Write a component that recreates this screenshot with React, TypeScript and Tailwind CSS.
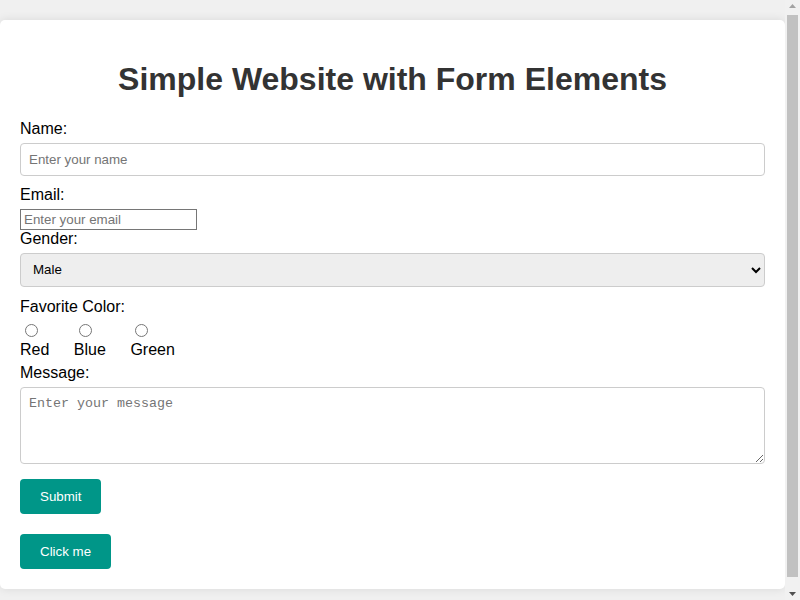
import { useState } from "react";

const colors = ["Red", "Blue", "Green"];

// headless capture hides native scrollbars, so the page scrollbar is drawn
const Scrollbar = () => (
    <div className="flex w-[15px] shrink-0 flex-col bg-[#f1f1f1]">
        <div className="flex h-[12px] items-center justify-center">
            <svg width="7" height="4" viewBox="0 0 7 4">
                <polygon points="3.5,0 7,4 0,4" fill="#a3a3a3" />
            </svg>
        </div>
        <div className="flex-1 px-[2px] pb-[11px] pt-[3px]">
            <div className="h-full bg-[#c1c1c1]" />
        </div>
        <div className="flex h-[12px] items-center justify-center">
            <svg width="7" height="4" viewBox="0 0 7 4">
                <polygon points="0,0 7,0 3.5,4" fill="#505050" />
            </svg>
        </div>
    </div>
);

export default function App() {
    const [color, setColor] = useState("");

    return (
        <div className="flex h-screen overflow-hidden bg-[#f0f0f0] font-['Liberation_Sans',Arial,sans-serif] leading-[normal] text-black">
            <div className="min-w-0 flex-1 py-[20px]">
                <div className="mx-auto max-w-[800px] rounded-[5px] bg-white p-[20px] shadow-[0_0_10px_rgba(0,0,0,0.1)]">
                    <h1 className="my-[21.44px] text-center text-[32px] font-bold leading-[normal] text-[#333]">
                        Simple Website with Form Elements
                    </h1>

                    <form onSubmit={(e) => e.preventDefault()}>
                        <label htmlFor="name" className="mb-[5px] block text-[16px]">Name:</label>
                        <input
                            id="name"
                            type="text"
                            placeholder="Enter your name"
                            className="mb-[10px] block h-[33px] w-full rounded-[4px] border border-[#ccc] px-[8px] text-[13.33px] placeholder:text-[#757575]"
                        />

                        <label htmlFor="email" className="mb-[5px] block text-[16px]">Email:</label>
                        <input
                            id="email"
                            type="email"
                            placeholder="Enter your email"
                            className="block h-[21px] w-[177px] border border-[#767676] px-[3px] text-[13.33px] placeholder:text-[#757575]"
                        />

                        <label htmlFor="gender" className="mb-[5px] block text-[16px]">Gender:</label>
                        <select
                            id="gender"
                            className="mb-[11px] block h-[34px] w-full rounded-[4px] border border-[#ccc] bg-[#eee] px-[8px] text-[13.33px]"
                        >
                            <option>Male</option>
                            <option>Female</option>
                            <option>Other</option>
                        </select>

                        <label className="mb-[5px] block text-[16px]">Favorite Color:</label>
                        <div className="flex gap-[24.5px]">
                            {colors.map((c) => (
                                <div key={c} className="flex flex-col items-start">
                                    <div className="h-[19.7px]">
                                        <input
                                            type="radio"
                                            name="color"
                                            id={c.toLowerCase()}
                                            checked={color === c}
                                            onChange={() => setColor(c)}
                                            className="ml-[5px] mr-[3px] mt-[3px] h-[13px] w-[13px]"
                                        />
                                    </div>
                                    <label htmlFor={c.toLowerCase()} className="mb-[5px] block text-[16px]">{c}</label>
                                </div>
                            ))}
                        </div>

                        <label htmlFor="message" className="mb-[5px] block text-[16px]">Message:</label>
                        <textarea
                            id="message"
                            rows={4}
                            placeholder="Enter your message"
                            className="block h-[77px] w-full rounded-[4px] border border-[#ccc] p-[8px] font-['Liberation_Mono',monospace] text-[13.33px] placeholder:text-[#757575]"
                        />

                        <button
                            type="submit"
                            className="mt-[15px] block rounded-[4px] bg-[#009688] px-[20px] py-[10px] text-[13.33px] leading-[15.3px] text-white"
                        >
                            Submit
                        </button>
                    </form>

                    <button className="mt-[20px] block rounded-[4px] bg-[#009688] px-[20px] py-[10px] text-[13.33px] leading-[15.3px] text-white">
                        Click me
                    </button>
                </div>
            </div>
            <Scrollbar />
        </div>
    );
}
